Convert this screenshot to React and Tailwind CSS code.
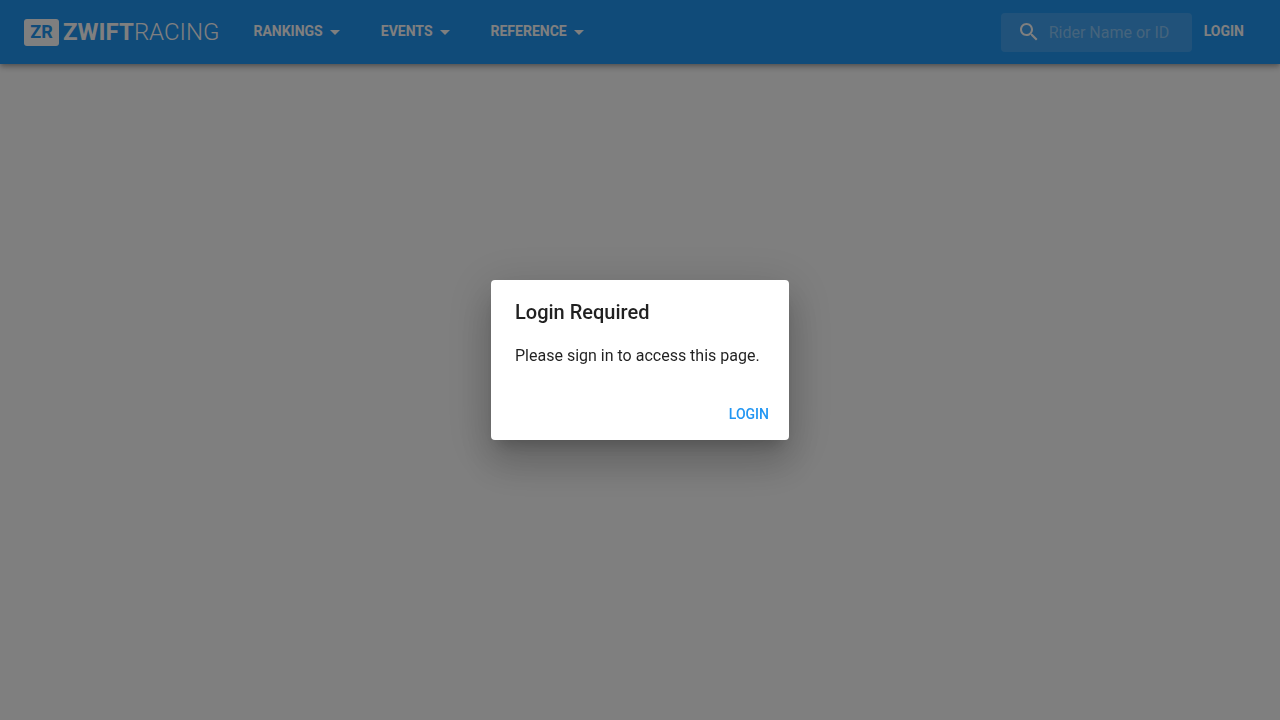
import React from 'react';

const menus = ['Rankings', 'Events', 'Reference'];

function Logo() {
  return (
    <a href="#home" className="flex items-center gap-1 text-2xl leading-7">
      <span className="flex h-[27px] w-[35px] items-center justify-center rounded-[3px] bg-white text-lg font-bold text-[#2196f3]">
        ZR
      </span>
      <span>
        <span className="font-bold">ZWIFT</span>
        <span className="font-light">RACING</span>
      </span>
    </a>
  );
}

function MenuButton({ label }) {
  return (
    <button type="button" className="flex items-center text-sm font-bold uppercase leading-6">
      <span className="pb-0.5">{label}</span>
      <svg viewBox="0 0 24 24" className="h-6 w-6" fill="currentColor" aria-hidden="true">
        <path d="m7 10 5 5 5-5z" />
      </svg>
    </button>
  );
}

function SearchBox() {
  return (
    <label className="flex h-[39px] w-[191px] items-center gap-2 rounded bg-white/15 pl-4 pr-2">
      <svg viewBox="0 0 24 24" className="h-6 w-6 shrink-0" fill="currentColor" aria-hidden="true">
        <path d="M15.5 14h-.79l-.28-.27C15.41 12.59 16 11.11 16 9.5 16 5.91 13.09 3 9.5 3S3 5.91 3 9.5 5.91 16 9.5 16c1.61 0 3.09-.59 4.23-1.57l.27.28v.79l5 4.99L20.49 19l-4.99-5zm-6 0C7.01 14 5 11.99 5 9.5S7.01 5 9.5 5 14 7.01 14 9.5 11.99 14 9.5 14z" />
      </svg>
      <input
        type="text"
        aria-label="Rider Name or ID"
        placeholder="Rider Name or ID"
        className="min-w-0 flex-1 bg-transparent pt-0.5 text-base text-white outline-none placeholder:text-white/40"
      />
    </label>
  );
}

function LoginDialog() {
  return (
    <div className="fixed inset-0 flex items-center justify-center bg-black/50">
      <div
        role="dialog"
        aria-modal="true"
        aria-labelledby="login-title"
        className="min-w-[298px] rounded bg-white text-black/87 shadow-[0_11px_15px_-7px_rgba(0,0,0,0.2),0_24px_38px_3px_rgba(0,0,0,0.14),0_9px_46px_8px_rgba(0,0,0,0.12)]"
      >
        <h2 id="login-title" className="px-6 py-4 text-xl font-medium leading-8">
          Login Required
        </h2>
        <p className="px-6 pb-5 text-base leading-6">Please sign in to access this page.</p>
        <div className="flex justify-end p-2">
          <button type="button" className="px-3 py-1.5 text-sm font-medium uppercase leading-6 text-[#2196f3]">
            Login
          </button>
        </div>
      </div>
    </div>
  );
}

export default function App() {
  return (
    <div className="min-h-screen bg-white font-['Roboto',sans-serif]">
      <header className="flex h-16 items-center justify-between bg-[#2196f3] pl-6 pr-9 text-white shadow-[0_2px_4px_-1px_rgba(0,0,0,0.2),0_4px_5px_0_rgba(0,0,0,0.14),0_1px_10px_0_rgba(0,0,0,0.12)]">
        <div className="flex items-center gap-[34px]">
          <Logo />
          <nav className="flex items-center gap-[34px]">
            {menus.map((label) => (
              <MenuButton key={label} label={label} />
            ))}
          </nav>
        </div>
        <div className="flex items-center gap-3">
          <SearchBox />
          <button type="button" className="pb-0.5 text-sm font-bold uppercase leading-6">
            Login
          </button>
        </div>
      </header>
      <LoginDialog />
    </div>
  );
}
